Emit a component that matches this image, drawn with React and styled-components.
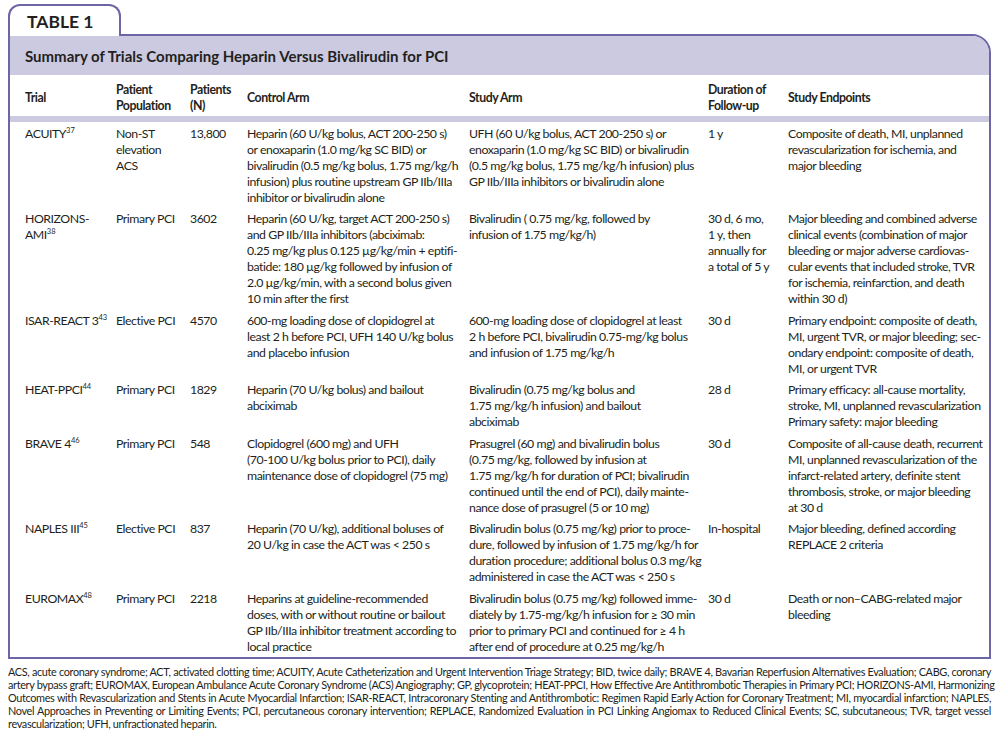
import React from "react";
import styled, { createGlobalStyle } from "styled-components";

const GlobalStyle = createGlobalStyle`
  body {
    margin: 0;
    padding: 4px 8px 0 8px;
    background: #fff;
    color: #231f20;
    font-family: Lato, "Liberation Sans", Arial, sans-serif;
  }
`;

const purple = "#6c66a6";
const lavender = "#cccae0";

const Figure = styled.div`
  width: 983px;
`;

const Tab = styled.div`
  position: relative;
  z-index: 1;
  box-sizing: border-box;
  width: 113px;
  height: 32px;
  margin-bottom: -2px;
  padding: 5px 0 0 17px;
  background: #fff;
  border: 2px solid ${purple};
  border-bottom: none;
  border-radius: 12px 12px 0 0;
  font-weight: bold;
  font-size: 17.5px;
  line-height: 22px;
`;

const Box = styled.div`
  border: 2px solid ${purple};
  border-top-right-radius: 19px;
  overflow: hidden;
`;

const TitleBar = styled.div`
  height: 39px;
  display: flex;
  align-items: center;
  padding-left: 15px;
  background: ${lavender};
  font-weight: bold;
  font-size: 15px;
`;

const Table = styled.table`
  width: 979px;
  border-collapse: collapse;
  table-layout: fixed;
  font-size: 12.3px;
  letter-spacing: -0.45px;
  line-height: 16px;
`;

const HeadRow = styled.tr`
  height: 44px;
  border-bottom: 6px solid ${lavender};
`;

const Th = styled.th`
  text-align: left;
  vertical-align: middle;
  font-weight: bold;
  padding: 4px 0 0 ${(p) => (p.$first ? "15px" : "0")};
  white-space: nowrap;
`;

const Td = styled.td`
  vertical-align: top;
  padding: 3.5px 0 2px ${(p) => (p.$first ? "15px" : "0")};
  white-space: nowrap;
`;

const Sup = styled.sup`
  font-size: 7.5px;
  line-height: 0;
  vertical-align: 5px;
  letter-spacing: 0;
`;

const Notes = styled.div`
  margin-top: 6px;
  font-size: 10.9px;
  letter-spacing: -0.35px;
  line-height: 13px;
`;

const NoteLine = styled.div`
  text-align: justify;
  text-align-last: ${(p) => (p.$last ? "left" : "justify")};
  white-space: nowrap;
`;

const widths = [106, 74, 57, 222, 239, 80, 201];
const headers = [
  ["Trial"],
  ["Patient", "Population"],
  ["Patients", "(N)"],
  ["Control Arm"],
  ["Study Arm"],
  ["Duration of", "Follow-up"],
  ["Study Endpoints"],
];

const rows = [
  [
    [<>ACUITY<Sup>37</Sup></>],
    ["Non-ST", "elevation", "ACS"],
    ["13,800"],
    [
      "Heparin (60 U/kg bolus, ACT 200-250 s)",
      "or enoxaparin (1.0 mg/kg SC BID) or",
      "bivalirudin (0.5 mg/kg bolus, 1.75 mg/kg/h",
      "infusion) plus routine upstream GP IIb/IIIa",
      "inhibitor or bivalirudin alone",
    ],
    [
      "UFH (60 U/kg bolus, ACT 200-250 s) or",
      "enoxaparin (1.0 mg/kg SC BID) or bivalirudin",
      "(0.5 mg/kg bolus, 1.75 mg/kg/h infusion) plus",
      "GP IIb/IIIa inhibitors or bivalirudin alone",
    ],
    ["1 y"],
    [
      "Composite of death, MI, unplanned",
      "revascularization for ischemia, and",
      "major bleeding",
    ],
  ],
  [
    ["HORIZONS-", <>AMI<Sup>38</Sup></>],
    ["Primary PCI"],
    ["3602"],
    [
      "Heparin (60 U/kg, target ACT 200-250 s)",
      "and GP IIb/IIIa inhibitors (abciximab:",
      "0.25 mg/kg plus 0.125 µg/kg/min + eptifi-",
      "batide: 180 µg/kg followed by infusion of",
      "2.0 µg/kg/min, with a second bolus given",
      "10 min after the first",
    ],
    ["Bivalirudin ( 0.75 mg/kg, followed by", "infusion of 1.75 mg/kg/h)"],
    ["30 d, 6 mo,", "1 y, then", "annually for", "a total of 5 y"],
    [
      "Major bleeding and combined adverse",
      "clinical events (combination of major",
      "bleeding or major adverse cardiovas-",
      "cular events that included stroke, TVR",
      "for ischemia, reinfarction, and death",
      "within 30 d)",
    ],
  ],
  [
    [<>ISAR-REACT 3<Sup>43</Sup></>],
    ["Elective PCI"],
    ["4570"],
    [
      "600-mg loading dose of clopidogrel at",
      "least 2 h before PCI, UFH 140 U/kg bolus",
      "and placebo infusion",
    ],
    [
      "600-mg loading dose of clopidogrel at least",
      "2 h before PCI, bivalirudin 0.75-mg/kg bolus",
      "and infusion of 1.75 mg/kg/h",
    ],
    ["30 d"],
    [
      "Primary endpoint: composite of death,",
      "MI, urgent TVR, or major bleeding; sec-",
      "ondary endpoint: composite of death,",
      "MI, or urgent TVR",
    ],
  ],
  [
    [<>HEAT-PPCI<Sup>44</Sup></>],
    ["Primary PCI"],
    ["1829"],
    ["Heparin (70 U/kg bolus) and bailout", "abciximab"],
    [
      "Bivalirudin (0.75 mg/kg bolus and",
      "1.75 mg/kg/h infusion) and bailout",
      "abciximab",
    ],
    ["28 d"],
    [
      "Primary efficacy: all-cause mortality,",
      "stroke, MI, unplanned revascularization",
      "Primary safety: major bleeding",
    ],
  ],
  [
    [<>BRAVE 4<Sup>46</Sup></>],
    ["Primary PCI"],
    ["548"],
    [
      "Clopidogrel (600 mg) and UFH",
      "(70-100 U/kg bolus prior to PCI), daily",
      "maintenance dose of clopidogrel (75 mg)",
    ],
    [
      "Prasugrel (60 mg) and bivalirudin bolus",
      "(0.75 mg/kg, followed by infusion at",
      "1.75 mg/kg/h for duration of PCI; bivalirudin",
      "continued until the end of PCI), daily mainte-",
      "nance dose of prasugrel (5 or 10 mg)",
    ],
    ["30 d"],
    [
      "Composite of all-cause death, recurrent",
      "MI, unplanned revascularization of the",
      "infarct-related artery, definite stent",
      "thrombosis, stroke, or major bleeding",
      "at 30 d",
    ],
  ],
  [
    [<>NAPLES III<Sup>45</Sup></>],
    ["Elective PCI"],
    ["837"],
    [
      "Heparin (70 U/kg), additional boluses of",
      "20 U/kg in case the ACT was < 250 s",
    ],
    [
      "Bivalirudin bolus (0.75 mg/kg) prior to proce-",
      "dure, followed by infusion of 1.75 mg/kg/h for",
      "duration procedure; additional bolus 0.3 mg/kg",
      "administered in case the ACT was < 250 s",
    ],
    ["In-hospital"],
    ["Major bleeding, defined according", "REPLACE 2 criteria"],
  ],
  [
    [<>EUROMAX<Sup>48</Sup></>],
    ["Primary PCI"],
    ["2218"],
    [
      "Heparins at guideline-recommended",
      "doses, with or without routine or bailout",
      "GP IIb/IIIa inhibitor treatment according to",
      "local practice",
    ],
    [
      "Bivalirudin bolus (0.75 mg/kg) followed imme-",
      "diately by 1.75-mg/kg/h infusion for ≥ 30 min",
      "prior to primary PCI and continued for ≥ 4 h",
      "after end of procedure at 0.25 mg/kg/h",
    ],
    ["30 d"],
    ["Death or non–CABG-related major", "bleeding"],
  ],
];

const notes = [
  "ACS, acute coronary syndrome; ACT, activated clotting time; ACUITY, Acute Catheterization and Urgent Intervention Triage Strategy; BID, twice daily; BRAVE 4, Bavarian Reperfusion Alternatives Evaluation; CABG, coronary",
  "artery bypass graft; EUROMAX, European Ambulance Acute Coronary Syndrome (ACS) Angiography; GP, glycoprotein; HEAT-PPCI, How Effective Are Antithrombotic Therapies in Primary PCI; HORIZONS-AMI, Harmonizing",
  "Outcomes with Revascularization and Stents in Acute Myocardial Infarction; ISAR-REACT, Intracoronary Stenting and Antithrombotic: Regimen Rapid Early Action for Coronary Treatment; MI, myocardial infarction; NAPLES,",
  "Novel Approaches in Preventing or Limiting Events; PCI, percutaneous coronary intervention; REPLACE, Randomized Evaluation in PCI Linking Angiomax to Reduced Clinical Events; SC, subcutaneous; TVR, target vessel",
  "revascularization; UFH, unfractionated heparin.",
];

function Lines({ lines }) {
  return lines.map((l, i) => (
    <React.Fragment key={i}>
      {i > 0 && <br />}
      {l}
    </React.Fragment>
  ));
}

export default function App() {
  return (
    <>
      <GlobalStyle />
      <Figure>
        <Tab>TABLE 1</Tab>
        <Box>
          <TitleBar>Summary of Trials Comparing Heparin Versus Bivalirudin for PCI</TitleBar>
          <Table>
            <colgroup>
              {widths.map((w, i) => (
                <col key={i} style={{ width: w }} />
              ))}
            </colgroup>
            <thead>
              <HeadRow>
                {headers.map((h, i) => (
                  <Th key={i} $first={i === 0}>
                    <Lines lines={h} />
                  </Th>
                ))}
              </HeadRow>
            </thead>
            <tbody>
              {rows.map((r, ri) => (
                <tr key={ri}>
                  {r.map((c, ci) => (
                    <Td key={ci} $first={ci === 0}>
                      <Lines lines={c} />
                    </Td>
                  ))}
                </tr>
              ))}
            </tbody>
          </Table>
        </Box>
        <Notes>
          {notes.map((n, i) => (
            <NoteLine key={i} $last={i === notes.length - 1}>
              {n}
            </NoteLine>
          ))}
        </Notes>
      </Figure>
    </>
  );
}
